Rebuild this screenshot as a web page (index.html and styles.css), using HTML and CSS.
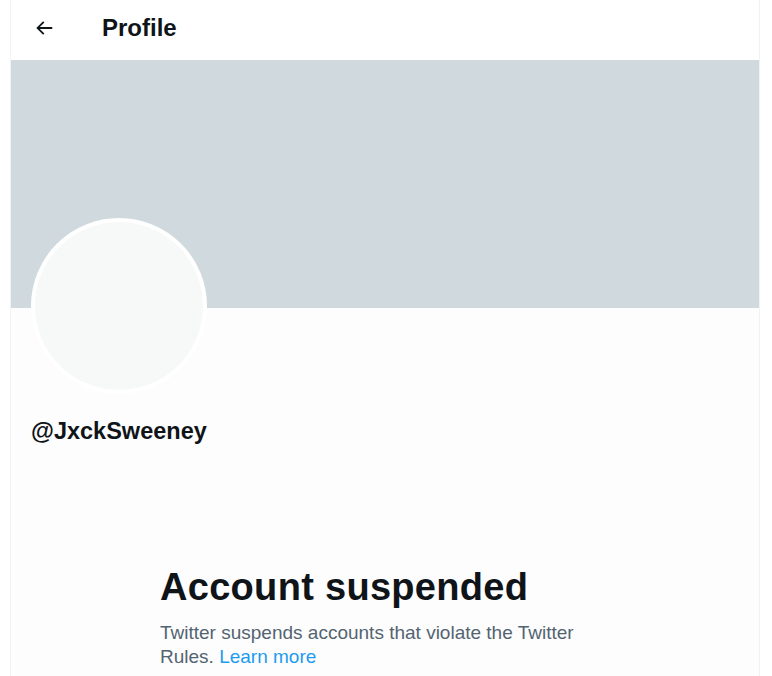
FILE: index.html
```html
<!DOCTYPE html>
<html>
<head>
<meta charset="utf-8">
<link rel="stylesheet" href="styles.css">
</head>
<body>
<main class="column">
  <header class="topbar">
    <span class="back">
      <svg viewBox="0 0 24 24" width="22" height="22"><path d="M7.414 13l5.043 5.04-1.414 1.42L3.586 12l7.457-7.46 1.414 1.42L7.414 11H21v2H7.414z" fill="#0f1419"/></svg>
    </span>
    <h1 class="title">Profile</h1>
  </header>
  <div class="banner"></div>
  <div class="profile">
    <div class="avatar"></div>
    <div class="handle">@JxckSweeney</div>
  </div>
  <section class="empty">
    <h2 class="empty-title">Account suspended</h2>
    <p class="empty-text">Twitter suspends accounts that violate the Twitter Rules. <a class="link" href="#">Learn more</a></p>
  </section>
</main>
</body>
</html>
```

FILE: styles.css
```css
html, body {
  margin: 0;
  padding: 0;
  background: #ffffff;
  font-family: "Liberation Sans", Arial, sans-serif;
  color: #0f1419;
}
.column {
  margin-left: 10px;
  width: 748px;
  min-height: 676px;
  border-left: 1px solid #eff3f4;
  border-right: 1px solid #eff3f4;
  background: #fdfdfd;
}
.topbar {
  box-sizing: border-box;
  height: 60px;
  padding-bottom: 4px;
  display: flex;
  align-items: center;
  background: #ffffff;
}
.back {
  width: 22px;
  height: 22px;
  margin-left: 22px;
  display: flex;
}
.title {
  margin: 0 0 0 47px;
  font-size: 24px;
  line-height: 28px;
  font-weight: 700;
}
.banner {
  height: 248px;
  background: #cfd9de;
}
.profile {
  padding: 0 20px;
}
.avatar {
  width: 168px;
  height: 168px;
  margin-top: -90px;
  border-radius: 50%;
  border: 4px solid #ffffff;
  background: #f7f9f9;
}
.handle {
  margin-top: 24px;
  font-size: 23.5px;
  font-weight: 700;
}
.empty {
  width: 440px;
  margin: 120px 0 0 149px;
}
.empty-title {
  margin: 0;
  font-size: 38px;
  line-height: 44px;
  letter-spacing: 0.3px;
  font-weight: 700;
}
.empty-text {
  margin: 12px 0 0;
  font-size: 19px;
  line-height: 24px;
  color: #536471;
}
.link {
  color: #1d9bf0;
  text-decoration: none;
}
```
